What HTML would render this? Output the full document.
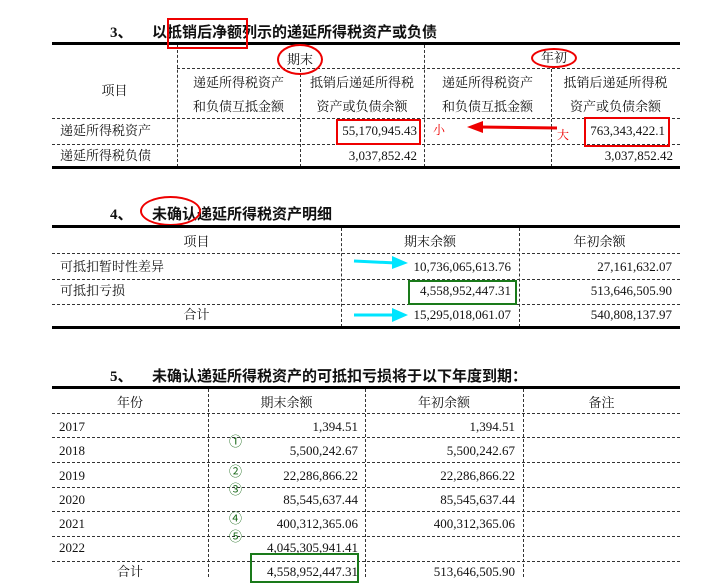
<!DOCTYPE html><html><head><meta charset="utf-8"><style>
body{margin:0;width:715px;height:577px;background:#fff;position:relative;overflow:hidden;font-family:"Liberation Serif","Noto Serif CJK SC","Noto Sans CJK SC",serif;color:#111}
.t{position:absolute;font-size:13px;white-space:nowrap;line-height:16px}
.r{text-align:right}
.c{text-align:center}
.h{position:absolute;font-size:15px;font-weight:bold;white-space:nowrap;line-height:18px;font-family:"Liberation Serif","Noto Sans CJK SC",serif}
.th{position:absolute;height:3px;background:#000}
.dh{position:absolute;border-top:1px dashed #333;height:0}
.dv{position:absolute;border-left:1px dashed #333;width:0}
.box{position:absolute;border:2px solid #e00}
.g{position:absolute;border:2px solid #1a7a1a}
.n{position:absolute;color:#1a6a1a;font-size:13px;font-family:"Noto Sans CJK SC",sans-serif}
.ell{position:absolute;border:2px solid #e00;border-radius:50%}
</style></head><body>
<div class="h" style="left:110px;top:24px">3、</div>
<div class="h" style="left:152px;top:24px">以抵销后净额列示的递延所得税资产或负债</div>
<div class="th" style="left:52px;width:628px;top:42px"></div>
<div class="dv" style="left:177px;top:45px;height:122px"></div>
<div class="dv" style="left:300px;top:69px;height:98px"></div>
<div class="dv" style="left:424px;top:45px;height:122px"></div>
<div class="dv" style="left:551px;top:69px;height:98px"></div>
<div class="dh" style="left:177px;width:503px;top:68px"></div>
<div class="dh" style="left:52px;width:628px;top:118px"></div>
<div class="dh" style="left:52px;width:628px;top:144px"></div>
<div class="th" style="left:52px;width:628px;top:166px"></div>
<div class="t c" style="left:52px;width:125px;top:83px">项目</div>
<div class="t" style="left:287px;top:52px">期末</div>
<div class="t" style="left:541px;top:50px">年初</div>
<div class="t c" style="left:177px;width:123px;top:75px">递延所得税资产</div>
<div class="t c" style="left:177px;width:123px;top:99px">和负债互抵金额</div>
<div class="t c" style="left:300px;width:124px;top:75px">抵销后递延所得税</div>
<div class="t c" style="left:300px;width:124px;top:99px">资产或负债余额</div>
<div class="t c" style="left:424px;width:127px;top:75px">递延所得税资产</div>
<div class="t c" style="left:424px;width:127px;top:99px">和负债互抵金额</div>
<div class="t c" style="left:551px;width:129px;top:75px">抵销后递延所得税</div>
<div class="t c" style="left:551px;width:129px;top:99px">资产或负债余额</div>
<div class="t" style="left:60px;top:123px">递延所得税资产</div>
<div class="t r" style="left:300px;width:117px;top:123px">55,170,945.43</div>
<div class="t r" style="left:551px;width:114px;top:123px">763,343,422.1</div>
<div class="t" style="left:60px;top:148px">递延所得税负债</div>
<div class="t r" style="left:300px;width:117px;top:148px">3,037,852.42</div>
<div class="t r" style="left:551px;width:122px;top:148px">3,037,852.42</div>
<div class="box" style="left:167px;top:18px;width:77px;height:27px"></div>
<div class="ell" style="left:277px;top:44px;width:42px;height:27px"></div>
<div class="ell" style="left:531px;top:48px;width:42px;height:16px"></div>
<div class="box" style="left:336px;top:119px;width:81px;height:22px"></div>
<div class="box" style="left:584px;top:117px;width:82px;height:26px"></div>
<div class="t" style="left:433px;top:122px;color:#e00;font-size:12px">小</div>
<div class="t" style="left:557px;top:127px;color:#e00;font-size:12px">大</div>
<svg style="position:absolute;left:465px;top:120px" width="95" height="16"><line x1="92" y1="8" x2="14" y2="7" stroke="#e00" stroke-width="3"/><polygon points="2,7 18,1 18,13" fill="#e00"/></svg>

<div class="h" style="left:110px;top:206px">4、</div>
<div class="h" style="left:152px;top:206px">未确认递延所得税资产明细</div>
<div class="ell" style="left:140px;top:196px;width:57px;height:26px"></div>
<div class="th" style="left:52px;width:628px;top:225px"></div>
<div class="dv" style="left:341px;top:228px;height:99px"></div>
<div class="dv" style="left:519px;top:228px;height:99px"></div>
<div class="dh" style="left:52px;width:628px;top:253px"></div>
<div class="dh" style="left:52px;width:628px;top:279px"></div>
<div class="dh" style="left:52px;width:628px;top:304px"></div>
<div class="th" style="left:52px;width:628px;top:326px"></div>
<div class="t c" style="left:52px;width:289px;top:234px">项目</div>
<div class="t c" style="left:341px;width:178px;top:234px">期末余额</div>
<div class="t c" style="left:519px;width:161px;top:234px">年初余额</div>
<div class="t" style="left:60px;top:259px">可抵扣暂时性差异</div>
<div class="t r" style="left:341px;width:170px;top:259px">10,736,065,613.76</div>
<div class="t r" style="left:519px;width:153px;top:259px">27,161,632.07</div>
<div class="t" style="left:60px;top:283px">可抵扣亏损</div>
<div class="t r" style="left:341px;width:170px;top:283px">4,558,952,447.31</div>
<div class="t r" style="left:519px;width:153px;top:283px">513,646,505.90</div>
<div class="t c" style="left:52px;width:289px;top:307px">合计</div>
<div class="t r" style="left:341px;width:170px;top:307px">15,295,018,061.07</div>
<div class="t r" style="left:519px;width:153px;top:307px">540,808,137.97</div>
<div class="g" style="left:408px;top:280px;width:105px;height:21px"></div>
<svg style="position:absolute;left:352px;top:255px" width="60" height="14"><line x1="2" y1="6" x2="44" y2="8" stroke="#00e5ff" stroke-width="3"/><polygon points="56,8 40,1 40,14" fill="#00e5ff"/></svg>
<svg style="position:absolute;left:352px;top:308px" width="60" height="14"><line x1="2" y1="7" x2="44" y2="7" stroke="#00e5ff" stroke-width="3"/><polygon points="56,7 40,0 40,14" fill="#00e5ff"/></svg>

<div class="h" style="left:110px;top:368px">5、</div>
<div class="h" style="left:152px;top:368px">未确认递延所得税资产的可抵扣亏损将于以下年度到期：</div>
<div class="th" style="left:52px;width:628px;top:386px"></div>
<div class="dv" style="left:208px;top:389px;height:188px"></div>
<div class="dv" style="left:365px;top:389px;height:188px"></div>
<div class="dv" style="left:523px;top:389px;height:188px"></div>
<div class="dh" style="left:52px;width:628px;top:413px"></div>
<div class="dh" style="left:52px;width:628px;top:437px"></div>
<div class="dh" style="left:52px;width:628px;top:462px"></div>
<div class="dh" style="left:52px;width:628px;top:487px"></div>
<div class="dh" style="left:52px;width:628px;top:511px"></div>
<div class="dh" style="left:52px;width:628px;top:536px"></div>
<div class="dh" style="left:52px;width:628px;top:561px"></div>
<div class="t c" style="left:52px;width:156px;top:395px">年份</div>
<div class="t c" style="left:208px;width:157px;top:395px">期末余额</div>
<div class="t c" style="left:365px;width:158px;top:395px">年初余额</div>
<div class="t c" style="left:523px;width:157px;top:395px">备注</div>
<div class="t" style="left:59px;top:419px">2017</div>
<div class="t r" style="left:208px;width:150px;top:419px">1,394.51</div>
<div class="t r" style="left:365px;width:150px;top:419px">1,394.51</div>
<div class="t" style="left:59px;top:443px">2018</div>
<div class="t r" style="left:208px;width:150px;top:443px">5,500,242.67</div>
<div class="t r" style="left:365px;width:150px;top:443px">5,500,242.67</div>
<div class="t" style="left:59px;top:468px">2019</div>
<div class="t r" style="left:208px;width:150px;top:468px">22,286,866.22</div>
<div class="t r" style="left:365px;width:150px;top:468px">22,286,866.22</div>
<div class="t" style="left:59px;top:492px">2020</div>
<div class="t r" style="left:208px;width:150px;top:492px">85,545,637.44</div>
<div class="t r" style="left:365px;width:150px;top:492px">85,545,637.44</div>
<div class="t" style="left:59px;top:516px">2021</div>
<div class="t r" style="left:208px;width:150px;top:516px">400,312,365.06</div>
<div class="t r" style="left:365px;width:150px;top:516px">400,312,365.06</div>
<div class="t" style="left:59px;top:540px">2022</div>
<div class="t r" style="left:208px;width:150px;top:540px">4,045,305,941.41</div>
<div class="t c" style="left:52px;width:156px;top:564px">合计</div>
<div class="t r" style="left:208px;width:150px;top:564px">4,558,952,447.31</div>
<div class="t r" style="left:365px;width:150px;top:564px">513,646,505.90</div>
<div class="g" style="left:250px;top:553px;width:105px;height:26px"></div>
<div class="n" style="left:229px;top:431px">①</div>
<div class="n" style="left:229px;top:461px">②</div>
<div class="n" style="left:229px;top:479px">③</div>
<div class="n" style="left:229px;top:508px">④</div>
<div class="n" style="left:229px;top:526px">⑤</div>
</body></html>
